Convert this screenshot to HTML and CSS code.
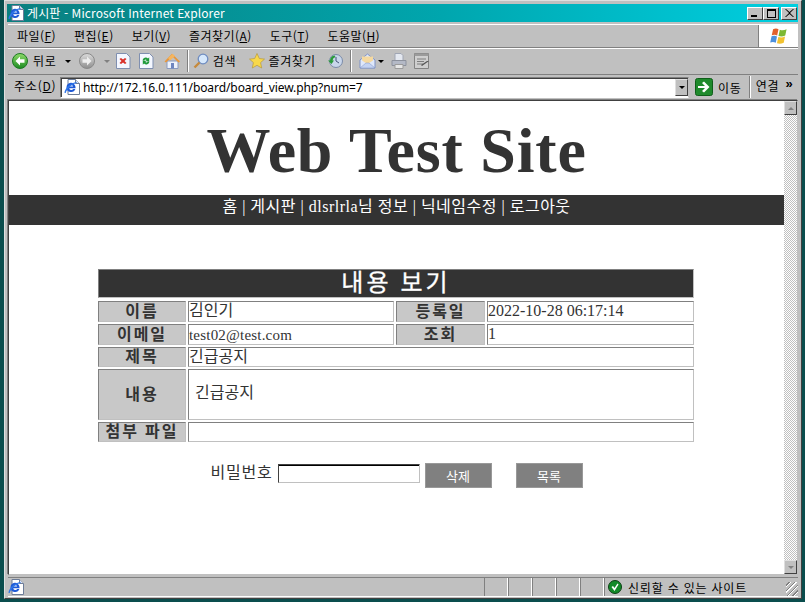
FILE: index.html
```html
<!DOCTYPE html>
<html lang="ko">
<head>
<meta charset="utf-8">
<title>게시판 - Microsoft Internet Explorer</title>
<link rel="stylesheet" href="styles.css">
</head>
<body>
<svg class="defs" width="0" height="0" aria-hidden="true">
  <defs>
    <linearGradient id="green" x1="0" y1="0" x2="0" y2="1"><stop offset="0" stop-color="#8fdc6a"/><stop offset="1" stop-color="#1c8a22"/></linearGradient>
    <linearGradient id="grey" x1="0" y1="0" x2="0" y2="1"><stop offset="0" stop-color="#dcdcdc"/><stop offset="1" stop-color="#8e8e8e"/></linearGradient>
    <symbol id="ie" viewBox="0 0 16 16">
      <path d="M4 .5h7.500l4 4v11H4z" fill="#fff" stroke="#6c7c98"/>
      <path d="M11.500 .5v4h4" fill="#dfe6f2" stroke="#6c7c98"/>
      <path d="M2.500 8.500a4.500 4.500 0 0 1 9-.5v1.300H5.200a2.200 2.200 0 0 0 4 .8h2.200a4.600 4.600 0 0 1-8.900-1.600zM5.300 7.500h3.900a2 2 0 0 0-3.900 0z" fill="#1f5ad6"/>
      <path d="M.5 13.500c.5-4 5-9 11.500-10.500.5 0 1 .5 .5 1C7 5.500 3 10 1.800 13.800c-.5.500-1.300.2-1.300-.3z" fill="#2f76e8"/>
    </symbol>
  </defs>
</svg>
<div class="window">
  <header class="titlebar">
    <svg class="ico16" viewBox="0 0 16 16"><use href="#ie"/></svg>
    <span class="title-text">게시판 - Microsoft Internet Explorer</span>
    <div class="caption-btns">
      <span class="cap"><i class="cap-min"></i></span>
      <span class="cap"><i class="cap-max"></i></span>
      <span class="cap cap-close"><svg viewBox="0 0 9 8" width="9" height="8"><path d="M1 0l3.500 3 3.500-3h1L5 4l4 4H8L4.500 5 1 8H0l4-4-4-4z" fill="#000"/></svg></span>
    </div>
  </header>

  <nav class="menubar">
    <div class="menus">
      <span>파일(<u>F</u>)</span><span>편집(<u>E</u>)</span><span>보기(<u>V</u>)</span><span>즐겨찾기(<u>A</u>)</span><span>도구(<u>T</u>)</span><span>도움말(<u>H</u>)</span>
    </div>
    <div class="flag">
      <svg viewBox="0 0 22 20" width="21" height="18">
        <path d="M5 2.500c2.500-1.500 4.500-1 6 0l-1.500 7c-1.800-1-3.800-1.200-6-.2z" fill="#e2602c"/>
        <path d="M12.500 3c2 1 4.500 1 7.500-.5l-1.500 7c-2.800 1.300-5 1.300-7.500.5z" fill="#7cb832"/>
        <path d="M3.300 10.300c2.200-1 4.200-.8 6 .2L8 17.500c-2-1-4-1.200-6.200-.2z" fill="#4c8fdc"/>
        <path d="M10.800 11c2.500.8 4.700.8 7.500-.5l-1.500 7c-3 1.300-5.300 1.300-7.500.5z" fill="#f2c230"/>
      </svg>
    </div>
  </nav>

  <div class="toolbar">
    <svg class="ico16 back" viewBox="0 0 16 16"><circle cx="8" cy="8" r="7.500" fill="url(#green)" stroke="#1c7a22"/><path d="M8 3.500L3.500 8 8 12.500V9.800h4.500V6.200H8z" fill="#fff"/></svg>
    <span class="tool-label first-label">뒤로</span>
    <i class="arrow arrow-back"></i>
    <svg class="ico16 forward" viewBox="0 0 16 16"><circle cx="8" cy="8" r="7.500" fill="url(#grey)" stroke="#8a8a8a"/><path d="M8 3.500L12.500 8 8 12.500V9.800H3.500V6.200H8z" fill="#eee"/></svg>
    <i class="arrow arrow-off"></i>
    <svg class="ico16 stop" viewBox="0 0 16 16"><path d="M.5 .5h10l3.500 3.500v11.500H.5z" fill="#f4f7ff" stroke="#7f8fb0"/><path d="M3.500 6l1.500-1 2 1.500L9 5l1.500 1L8.500 8l2 2L9 11 7 9.500 5 11l-1.500-1 2-2z" fill="#d8302a"/></svg>
    <svg class="ico16 refresh" viewBox="0 0 16 16"><path d="M.5 .5h10l3.500 3.500v11.500H.5z" fill="#f4f7ff" stroke="#7f8fb0"/><path d="M3.500 7.500a3.300 3.300 0 0 1 5.500-2l1.200-1.200v4H6.300l1.400-1.400a1.700 1.700 0 0 0-2.400 .6zM10.500 8.500a3.300 3.300 0 0 1-5.500 2l-1.200 1.200v-4h3.900l-1.400 1.400a1.700 1.700 0 0 0 2.400-.6z" fill="#1f9a3a"/></svg>
    <svg class="ico16 home" viewBox="0 0 17 16"><path d="M3 8v7.500h11V8z" fill="#eef2fb" stroke="#8a9ac0"/><path d="M7 10h3v5.500H7z" fill="#6f86c0"/><path d="M.5 8.500L8 .8l8 7.700-1.500 1L8.500 3.500 2 9.500z" fill="#e9973a"/><path d="M4 5L8.500 .8 11 3 6 7.500z" fill="#f5b55f"/></svg>
    <i class="tool-sep sep-a"></i>
    <svg class="ico16" viewBox="0 0 16 16"><circle cx="10" cy="6" r="4.800" fill="#d6e8fb" stroke="#6f8cc0" stroke-width="1.300"/><path d="M6.500 9.500L1.500 14.500" stroke="#c68a3c" stroke-width="2.400"/></svg>
    <span class="tool-label search-label">검색</span>
    <svg class="ico16 star" viewBox="0 0 16 16"><path d="M8 .5l2.300 5 5.200.6-3.900 3.500 1.100 5.400L8 12.300 3.300 15l1.100-5.400L.5 6.100l5.200-.6z" fill="#f8d84a" stroke="#b89a3a" stroke-width=".7"/></svg>
    <span class="tool-label fav-label">즐겨찾기</span>
    <svg class="ico16 history" viewBox="0 0 16 16"><circle cx="9" cy="8" r="6.500" fill="#c9d6ea" stroke="#7a8aa8"/><path d="M9 4v4l3 2" stroke="#44557a" fill="none"/><path d="M1 7.500l3.500 3.500L7 7.500H5.500A4 4 0 0 1 8.500 4L7.500 2.500A5.500 5.500 0 0 0 3 7.500z" fill="#2a9a3a"/></svg>
    <i class="tool-sep sep-b"></i>
    <svg class="mail" viewBox="0 0 17 16" width="17" height="16"><path d="M1 7l7.500-6L16 7v8H1z" fill="#dfe8fa" stroke="#7f93c6"/><path d="M3 7.500V3.500h11v4L8.500 11z" fill="#f5d9a0"/><path d="M1 15l6-5h3l6 5z" fill="#c4d3f2" stroke="#7f93c6" stroke-width=".5"/></svg>
    <i class="arrow arrow-mail"></i>
    <svg class="ico16 print" viewBox="0 0 16 16"><path d="M4 .5h6l2 2v5H4z" fill="#e4e8f0" stroke="#a0a6b4"/><path d="M1 7.500h14v5H1z" fill="#b4b9c6" stroke="#8c919d"/><path d="M4 11.500h8v4H4z" fill="#e6e6e6" stroke="#9b9b9b"/></svg>
    <svg class="ico16 edit" viewBox="0 0 16 16"><path d="M.5 .5h14v15H.5z" fill="#cfcfcf" stroke="#848484"/><path d="M.5 .5h14v2.500H.5z" fill="#9b9b9b"/><path d="M3 6h9M3 8.500h7M3 11h6" stroke="#7e7e7e"/><path d="M7 12l6-4 2 0-7 5z" fill="#555"/></svg>
  </div>

  <div class="addressbar">
    <span class="addr-label">주소(<u>D</u>)</span>
    <div class="addr-field">
      <svg class="ico16" viewBox="0 0 16 16"><use href="#ie"/></svg>
      <span class="addr-url">http://172.16.0.111/board/board_view.php?num=7</span>
      <span class="addr-drop"><i></i></span>
    </div>
    <svg class="go-ico" viewBox="0 0 18 18" width="18" height="18"><rect x=".5" y=".5" width="17" height="17" rx="2" fill="#1f8a2c" stroke="#0f5f1a"/><path d="M3 8h7L7 5l2-1.500L14.500 9 9 14.500 7 13l3-3H3z" fill="#fff"/></svg>
    <span class="go-label">이동</span>
    <i class="addr-sep"></i>
    <span class="links">연결</span>
    <span class="chev">»</span>
  </div>

  <div class="viewport">
    <main class="page">
      <h1 class="site-title">Web Test Site</h1>
      <nav class="site-nav">홈 | 게시판 | dlsrlrla님 정보 | 닉네임수정 | 로그아웃</nav>
      <section class="board">
        <h2 class="board-title">내용 보기</h2>
        <div class="th">이름</div><div class="td">김인기</div>
        <div class="th">등록일</div><div class="td">2022-10-28 06:17:14</div>
        <div class="th">이메일</div><div class="td small">test02@test.com</div>
        <div class="th">조회</div><div class="td">1</div>
        <div class="th">제목</div><div class="td wide">긴급공지</div>
        <div class="th">내용</div><div class="td wide body-cell">긴급공지</div>
        <div class="th">첨부 파일</div><div class="td wide"></div>
      </section>
      <form class="actions">
        <label class="pw-label" for="pw">비밀번호</label>
        <input class="pw-input" id="pw" type="password">
        <button class="btn" type="button">삭제</button>
        <button class="btn btn-list" type="button">목록</button>
      </form>
    </main>
    <aside class="scrollbar">
      <span class="sb-btn"><i class="up"></i></span>
      <span class="sb-btn"><i class="down"></i></span>
    </aside>
  </div>

  <footer class="statusbar">
    <svg class="ico16" viewBox="0 0 16 16"><use href="#ie"/></svg>
    <div class="status-main"></div>
    <i class="pane"></i><i class="pane"></i><i class="pane"></i><i class="pane"></i><i class="pane"></i>
    <div class="zone">
      <svg viewBox="0 0 14 14" width="14" height="14"><circle cx="7" cy="7" r="6.500" fill="#128a28" stroke="#0c3f14"/><path d="M3.500 7l1.500-1 1.500 2L9.500 3.500l1 1L6.500 11z" fill="#fff"/></svg>
      <span>신뢰할 수 있는 사이트</span>
    </div>
    <div class="grip"></div>
  </footer>
</div>
</body>
</html>
```
FILE: styles.css
```css
* { box-sizing: border-box; }
html, body { margin: 0; height: 100%; }
body {
  background: #0a4d4d;
  overflow: hidden;
  font-family: "Noto Sans CJK KR", "Liberation Sans", sans-serif;
  font-size: 12px;
  color: #000;
}
.defs { position: absolute; }
u { text-decoration: underline; }
i { display: block; font-style: normal; }
.ico16 { width: 16px; height: 16px; flex: none; }

.window {
  width: 798px;
  height: 599px;
  margin-left: 4px;
  padding: 3px 3px 1px 3px;
  background: #c0c0c0;
  border-top: 1px solid #dfdfdf;
  border-left: 1px solid #dfdfdf;
  border-right: 1px solid #404040;
  border-bottom: 1px solid #404040;
  display: flex;
  flex-direction: column;
}

.titlebar {
  height: 18px;
  flex: none;
  margin-left: -1px;
  display: flex;
  align-items: center;
  padding: 0 1px;
  gap: 3px;
  color: #fff;
  background: linear-gradient(90deg, #0a7f7f 0%, #00a6ae 55%, #00cfe0 100%);
}
.title-text { font-size: 12px; line-height: 18px; letter-spacing: .1px; }
.caption-btns { margin-left: auto; display: flex; }
.cap {
  width: 16px;
  height: 13px;
  background: #c0c0c0;
  border: 1px solid;
  border-color: #fff #404040 #404040 #fff;
  display: flex;
  align-items: center;
  justify-content: center;
}
.cap-close { margin-left: 2px; }
.cap-min { width: 6px; height: 2px; background: #000; margin-top: 6px; margin-right: 2px; }
.cap-max { width: 9px; height: 9px; border: 1px solid #000; border-top-width: 2px; }

.menubar {
  height: 24px;
  flex: none;
  margin-top: 2px;
  display: flex;
  border-top: 1px solid #fff;
  border-bottom: 1px solid #808080;
  box-shadow: 0 1px 0 #fff;
}
.menus {
  flex: 1;
  display: flex;
  gap: 18px;
  padding: 0 0 2px 9px;
  align-items: center;
  border-right: 1px solid #808080;
  letter-spacing: .45px;
}
.flag {
  width: 39px;
  background: #fff;
  display: flex;
  align-items: center;
  justify-content: center;
}

.toolbar {
  height: 27px;
  flex: none;
  padding: 0 0 0 4px;
  display: flex;
  align-items: center;
  border-bottom: 1px solid #808080;
}
.tool-label { font-size: 12px; color: #000; letter-spacing: .8px; margin-top: -1px; }
.first-label { margin-left: 5px; }
.arrow { width: 0; height: 0; border: 3px solid transparent; border-top: 3px solid #000; border-bottom-width: 0; }
.arrow-back { margin-left: 8px; }
.forward { margin-left: 8px; }
.arrow-off { margin-left: 9px; border-top-color: #808080; }
.stop { margin-left: 6px; }
.refresh { margin-left: 7px; }
.home { margin-left: 9px; width: 17px; }
.tool-sep { width: 2px; height: 22px; border-left: 1px solid #808080; border-right: 1px solid #fff; }
.sep-a { margin-left: 6px; margin-right: 4px; }
.search-label { margin-left: 4px; }
.star { margin-left: 13px; }
.fav-label { margin-left: 3px; }
.history { margin-left: 11px; }
.sep-b { margin-left: 7px; }
.mail { margin-left: 7px; flex: none; }
.arrow-mail { margin-left: 2px; }
.print { margin-left: 7px; }
.edit { margin-left: 7px; }

.addressbar {
  height: 24px;
  flex: none;
  display: flex;
  align-items: center;
  padding-left: 6px;
}
.addr-label { width: 46px; flex: none; letter-spacing: .8px; margin-top: -4px; }
.addr-field {
  width: 629px;
  height: 21px;
  flex: none;
  background: #fff;
  border: 1px solid;
  border-color: #808080 #c0c0c0 #fff #808080;
  box-shadow: inset 1px 1px 0 #404040;
  display: flex;
  align-items: center;
  padding-left: 3px;
}
.addr-url { margin-left: 3px; font-family: "Noto Sans", "Liberation Sans", sans-serif; font-size: 12px; letter-spacing: -.08px; white-space: nowrap; }
.addr-drop {
  margin-left: auto;
  width: 13px;
  height: 17px;
  background: #c0c0c0;
  border: 1px solid;
  border-color: #dfdfdf #404040 #404040 #dfdfdf;
  display: flex;
  align-items: center;
  justify-content: center;
}
.addr-drop i { border: 3px solid transparent; border-top: 3px solid #000; border-bottom-width: 0; }
.go-ico { margin-left: 6px; flex: none; }
.go-label { margin-left: 5px; letter-spacing: .8px; }
.addr-sep { width: 2px; height: 22px; margin-left: 7px; border-left: 1px solid #808080; border-right: 1px solid #fff; }
.links { margin-left: 5px; letter-spacing: .8px; margin-top: -4px; }
.chev { margin-left: 6px; font-weight: bold; font-size: 13px; font-family: "Liberation Sans", sans-serif; line-height: 12px; margin-top: -7px; }

.viewport {
  flex: 1;
  min-height: 0;
  margin-top: 1px;
  display: flex;
  background: #fff;
  border: 1px solid;
  border-color: #404040 #c0c0c0 #c0c0c0 #404040;
  box-shadow: -1px -1px 0 #808080;
}
.page {
  width: 775px;
  flex: none;
  font-family: "Liberation Serif", "Noto Sans CJK KR", serif;
  color: #333;
}
.site-title {
  margin: 0;
  height: 94px;
  font-size: 64px;
  line-height: 99px;
  font-weight: bold;
  letter-spacing: .8px;
  text-align: center;
  color: #333;
}
.site-nav {
  height: 30px;
  background: #333;
  color: #fff;
  text-align: center;
  font-size: 16px;
  line-height: 24px;
  letter-spacing: .5px;
}
.board {
  width: 596px;
  margin: 44px 90px 0 89px;
  display: grid;
  grid-template-columns: 88px 206px 89px 207px;
  grid-template-rows: 30px 21px 21px 20px 51px 20px;
  gap: 2px;
  font-size: 16px;
}
.board-title {
  grid-column: 1 / -1;
  margin: 0 0 1px;
  background: #333;
  color: #fff;
  border: 1px solid;
  border-color: #808080 #c0c0c0 #c0c0c0 #808080;
  text-align: center;
  font-size: 24px;
  font-weight: normal;
  letter-spacing: 3px;
  line-height: 27px;
  -webkit-text-stroke: .3px #fff;
}
.th, .td {
  border: 1px solid;
  border-color: #808080 #c0c0c0 #c0c0c0 #808080;
  line-height: 18px;
  white-space: nowrap;
}
.th {
  background: #c8c8c8;
  text-align: center;
  font-weight: bold;
  letter-spacing: 2px;
  color: #333;
  display: flex;
  align-items: center;
  justify-content: center;
}
.td { padding-left: 0; background: #fff; }
.td.small { font-size: 15px; line-height: 21px; letter-spacing: .2px; }
.wide { grid-column: 2 / -1; }
.body-cell { padding: 14px 0 0 6px; }

.actions {
  display: flex;
  justify-content: center;
  align-items: flex-start;
  margin-top: 21px;
  width: 100%;
}
.pw-label { font-size: 16px; letter-spacing: .8px; line-height: 20px; margin-right: 5px; }
.pw-input {
  width: 142px;
  height: 19px;
  margin: 1px 5px 0 0;
  padding: 0;
  background: #fff;
  border: 1px solid;
  border-color: #404040 #c0c0c0 #c0c0c0 #404040;
  box-shadow: inset 0 1px 0 #000;
}
.btn {
  width: 67px;
  height: 25px;
  padding: 0;
  background: #808080;
  color: #fff;
  border: 1px solid #999;
  font: 13px "Noto Sans CJK KR", sans-serif;
}
.btn-list { margin-left: 24px; }

.scrollbar {
  width: 13px;
  flex: none;
  display: flex;
  flex-direction: column;
  justify-content: space-between;
  background: repeating-conic-gradient(#c0c0c0 0 25%, #fff 0 50%) 0 0 / 2px 2px;
}
.sb-btn {
  height: 14px;
  background: #c0c0c0;
  border: 1px solid;
  border-color: #dfdfdf #404040 #404040 #dfdfdf;
  display: flex;
  align-items: center;
  justify-content: center;
}
.up { border: 3px solid transparent; border-bottom: 3px solid #808080; border-top-width: 0; }
.down { border: 3px solid transparent; border-top: 3px solid #808080; border-bottom-width: 0; }

.statusbar {
  height: 20px;
  flex: none;
  margin-top: 2px;
  display: flex;
  align-items: center;
  border-top: 1px solid #808080;
  border-bottom: 1px solid #fff;
}
.status-main { width: 460px; flex: none; }
.pane { width: 24px; height: 18px; border-left: 1px solid #808080; border-right: 1px solid #fff; }
.zone {
  flex: 1;
  height: 18px;
  display: flex;
  align-items: center;
  gap: 6px;
  padding-left: 3px;
  border-left: 1px solid #808080;
  letter-spacing: .8px;
}
.grip {
  width: 12px;
  height: 14px;
  margin-top: 3px;
  background: repeating-linear-gradient(135deg, #c0c0c0 0 2px, #808080 2px 3px, #fff 3px 4px);
}
```
